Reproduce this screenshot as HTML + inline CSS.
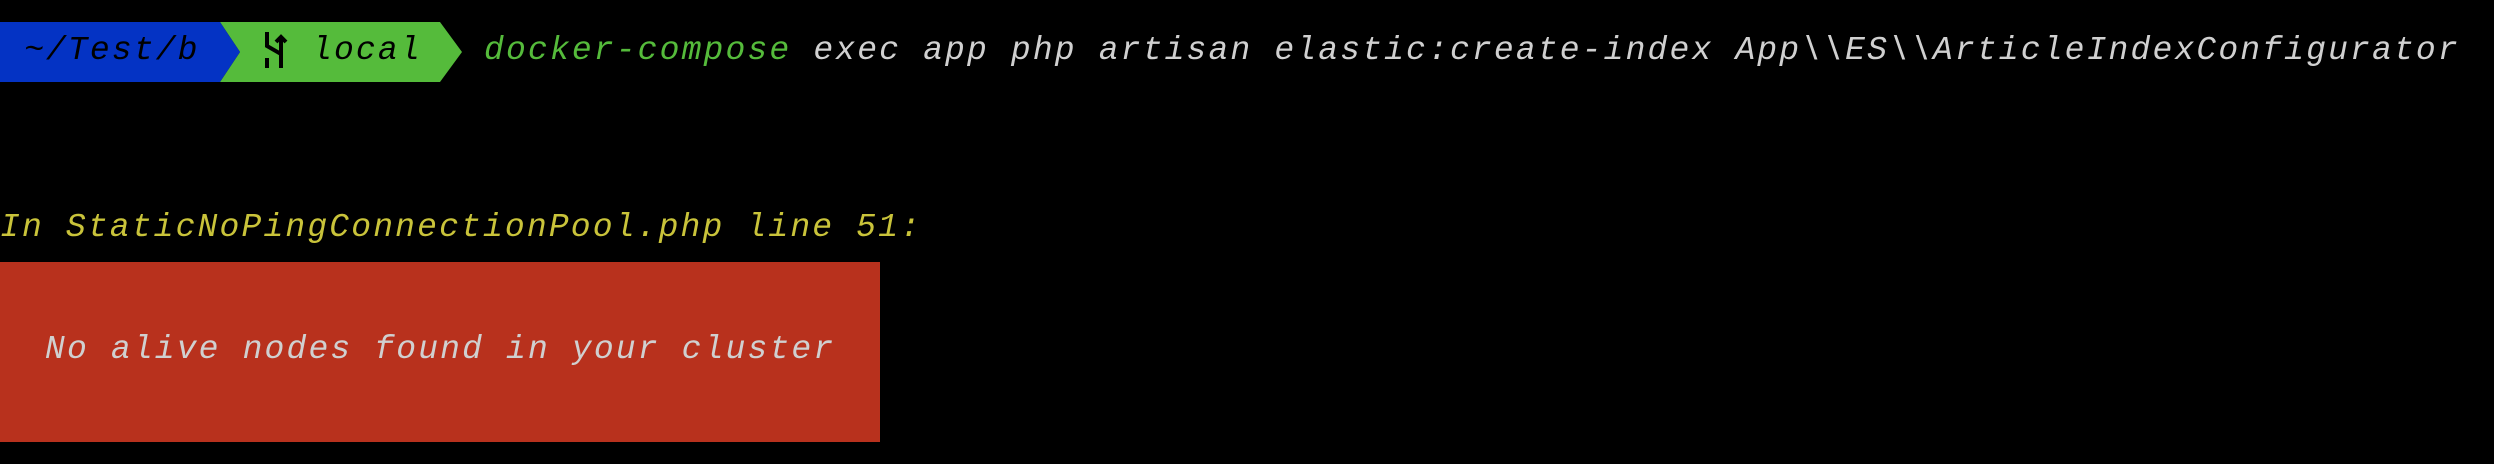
<!DOCTYPE html>
<html><head><meta charset="utf-8"><style>
html,body{margin:0;padding:0;background:#000;width:2494px;height:464px;overflow:hidden}
.t{position:absolute;font-family:"Liberation Mono",monospace;font-style:italic;font-size:33px;letter-spacing:2.15px;white-space:pre;line-height:40px}
</style></head><body>
<div style="position:absolute;left:0;top:22px;width:220px;height:60px;background:#0433c4"></div>
<svg style="position:absolute;left:0;top:0" width="500" height="100">
<polygon points="220,22 440,22 440,82 220,82 240,52" fill="#55bb3b"/>
<polygon points="219,22 220,22 240,52 220,82 219,82" fill="#0433c4"/>
<polygon points="440,22 462,52 440,82" fill="#55bb3b"/>
<path d="M267 32 V46 L281 54 V68 M267 58 V68 M281 54 V38 M276 42 L281 37 L286 42" stroke="#000" stroke-width="4" fill="none"/>
</svg>
<div class="t" style="left:24px;top:31px;color:#000">~/Test/b</div>
<div class="t" style="left:312px;top:31px;color:#000">local</div>
<div class="t" style="left:484px;top:31px;color:#55bb3b">docker-compose<span style="color:#d0d0d0"> exec app php artisan elastic:create-index App\\ES\\ArticleIndexConfigurator</span></div>
<div class="t" style="left:0;top:208px;color:#c9c33a">In StaticNoPingConnectionPool.php line 51:</div>
<div style="position:absolute;left:0;top:262px;width:880px;height:180px;background:#b8311d"></div>
<div class="t" style="left:45px;top:330px;color:#d0d0d0">No alive nodes found in your cluster</div>
</body></html>
